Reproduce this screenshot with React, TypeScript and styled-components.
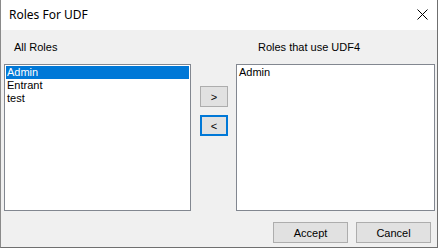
import React, { useState } from "react";
import styled, { createGlobalStyle } from "styled-components";

const GlobalStyle = createGlobalStyle`
  html, body {
    margin: 0;
    padding: 0;
    background: #ffffff;
  }
  body {
    font-family: "Liberation Sans", Arial, sans-serif;
    font-size: 11px;
  }
`;

const allRoles = ["Admin", "Entrant", "test"];
const usedRoles = ["Admin"];

const App = () => {
  const [selected, setSelected] = useState("Admin");

  return (
    <>
      <GlobalStyle />
      <Window>
        <TitleBar>
          <Title>Roles For UDF</Title>
          <Close aria-label="Close">
            <svg width="11" height="11" viewBox="0 0 11 11">
              <path d="M0.5 0.5 L10.5 10.5 M10.5 0.5 L0.5 10.5" stroke="#000" strokeWidth="1" />
            </svg>
          </Close>
        </TitleBar>
        <Body>
          <Columns>
            <Column $width={187}>
              <Label $indent={10}>All Roles</Label>
              <ListBox>
                {allRoles.map((r) => (
                  <Item key={r} $active={r === selected} onClick={() => setSelected(r)}>
                    {r}
                  </Item>
                ))}
              </ListBox>
            </Column>
            <Middle>
              <SmallButton>&gt;</SmallButton>
              <SmallButton $focused>&lt;</SmallButton>
            </Middle>
            <Column $width={199}>
              <Label $indent={22}>Roles that use UDF4</Label>
              <ListBox>
                {usedRoles.map((r) => (
                  <Item key={r}>{r}</Item>
                ))}
              </ListBox>
            </Column>
          </Columns>
          <Footer>
            <Button>Accept</Button>
            <Button>Cancel</Button>
          </Footer>
        </Body>
      </Window>
    </>
  );
};

export default App;

const Window = styled.div`
  width: 438px;
  height: 248px;
  box-sizing: border-box;
  display: flex;
  flex-direction: column;
  background: #f0f0f0;
  border-right: 1px solid #6f6f6f;
  border-bottom: 1px solid #6f6f6f;
  border-left: 1px solid #8a8a8a;
`;

const TitleBar = styled.div`
  height: 30px;
  flex: none;
  background: #ffffff;
  display: flex;
  align-items: center;
  justify-content: space-between;
  padding: 0 9px 0 8px;
`;

const Title = styled.div`
  font-family: "Noto Sans", "Liberation Sans", sans-serif;
  font-size: 12px;
  color: #000;
  margin-top: -1px;
`;

const Close = styled.div`
  width: 11px;
  height: 11px;
  display: flex;
  margin-top: -1px;
`;

const Body = styled.div`
  flex: 1;
  display: flex;
  flex-direction: column;
  padding: 11px 2px 0 3px;
`;

const Columns = styled.div`
  display: flex;
  align-items: flex-start;
`;

const Column = styled.div<{ $width: number }>`
  width: ${(p) => p.$width}px;
  display: flex;
  flex-direction: column;
`;

const Label = styled.div<{ $indent: number }>`
  height: 13px;
  line-height: 13px;
  margin: 0 0 10px ${(p) => p.$indent}px;
  color: #000;
`;

const ListBox = styled.div`
  height: 147px;
  box-sizing: border-box;
  background: #ffffff;
  border: 1px solid #828790;
  padding: 1px;
`;

const Item = styled.div<{ $active?: boolean }>`
  height: 13px;
  line-height: 13px;
  padding-left: 1px;
  color: ${(p) => (p.$active ? "#ffffff" : "#000000")};
  background: ${(p) => (p.$active ? "#0078d7" : "transparent")};
  cursor: default;
`;

const Middle = styled.div`
  width: 28px;
  margin: 0 8px 0 9px;
  padding-top: 45px;
  display: flex;
  flex-direction: column;
  gap: 8px;
`;

const SmallButton = styled.div<{ $focused?: boolean }>`
  width: 28px;
  height: 21px;
  box-sizing: border-box;
  display: flex;
  align-items: center;
  justify-content: center;
  background: #e1e1e1;
  border: ${(p) => (p.$focused ? "2px solid #0078d7" : "1px solid #adadad")};
  color: #000;
  font-size: 11px;
`;

const Footer = styled.div`
  display: flex;
  justify-content: flex-end;
  gap: 8px;
  margin-top: 11px;
  padding-right: 4px;
`;

const Button = styled.div`
  width: 75px;
  height: 21px;
  box-sizing: border-box;
  display: flex;
  align-items: center;
  justify-content: center;
  background: #e1e1e1;
  border: 1px solid #adadad;
  color: #000;
  font-size: 11px;
`;
